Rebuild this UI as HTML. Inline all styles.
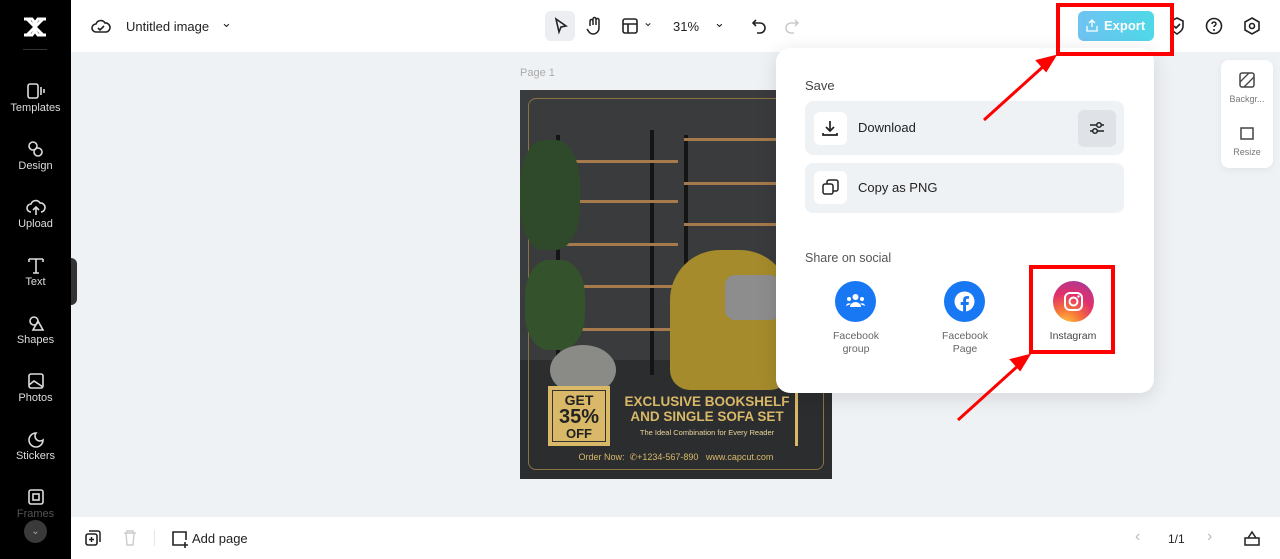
<!DOCTYPE html>
<html><head><meta charset="utf-8"><style>
*{margin:0;padding:0;box-sizing:border-box}
body{width:1280px;height:559px;overflow:hidden;background:#eff2f5;font-family:"Liberation Sans",sans-serif;position:relative;color:#222}
.abs{position:absolute}
.side{left:0;top:0;width:71px;height:559px;background:#000}
.si{position:absolute;left:0;width:71px;text-align:center;color:#ddd;font-size:11px}
.si svg{display:block;margin:0 auto 2px}
.top{left:71px;top:0;width:1209px;height:52px;background:#fff}
.bot{left:71px;top:517px;width:1209px;height:42px;background:#fff}
.pop{left:776px;top:48px;width:378px;height:345px;background:#fff;border-radius:14px;box-shadow:0 4px 20px rgba(0,0,0,.12)}
.row{position:absolute;left:29px;width:319px;background:#eff2f5;border-radius:8px}
.ib{position:absolute;left:9px;width:33px;height:33px;background:#fff;border-radius:6px}
.red{position:absolute;border:4px solid #f00}
</style></head><body>
<div class="abs side">
 <svg class="abs" style="left:22px;top:16px" width="26" height="22" viewBox="0 0 26 22"><path d="M2 3h8l3 4 3-4h8M2 19h8l3-4 3 4h8M5 3l16 16M21 3L5 19" stroke="#fff" stroke-width="3" fill="none"/></svg>
 <div class="abs" style="left:23px;top:49px;width:24px;height:1px;background:#333"></div>
 <div class="si" style="top:82px"><svg width="20" height="18"><rect x="2" y="2" width="10" height="14" rx="2" fill="none" stroke="#ddd" stroke-width="1.6"/><path d="M15 5v8M18 7v4" stroke="#ddd" stroke-width="1.6"/></svg>Templates</div>
 <div class="si" style="top:140px"><svg width="20" height="18"><circle cx="7" cy="6" r="4" fill="none" stroke="#ddd" stroke-width="1.6"/><circle cx="12" cy="12" r="4" fill="none" stroke="#ddd" stroke-width="1.6"/></svg>Design</div>
 <div class="si" style="top:198px"><svg width="20" height="18"><path d="M5 14a4 4 0 010-8 5 5 0 019-1 4 4 0 011 9M10 9v8M7 12l3-3 3 3" fill="none" stroke="#ddd" stroke-width="1.6"/></svg>Upload</div>
 <div class="si" style="top:256px"><svg width="20" height="18"><path d="M3 3h14M10 3v14M3 3v3M17 3v3M7 17h6" stroke="#ddd" stroke-width="1.6" fill="none"/></svg>Text</div>
 <div class="si" style="top:314px"><svg width="20" height="18"><circle cx="8" cy="7" r="4" fill="none" stroke="#ddd" stroke-width="1.6"/><path d="M12 7l5 9H7z" fill="none" stroke="#ddd" stroke-width="1.6"/></svg>Shapes</div>
 <div class="si" style="top:372px"><svg width="20" height="18"><rect x="3" y="2" width="14" height="14" rx="2" fill="none" stroke="#ddd" stroke-width="1.6"/><path d="M3 13l5-4 9 6" fill="none" stroke="#ddd" stroke-width="1.6"/></svg>Photos</div>
 <div class="si" style="top:430px"><svg width="20" height="18"><path d="M10 3a7 7 0 107 7 5 5 0 01-7-7z" fill="none" stroke="#ddd" stroke-width="1.6"/></svg>Stickers</div>
 <div class="si" style="top:488px;color:#555"><svg width="20" height="18"><rect x="3" y="2" width="14" height="14" rx="2" fill="none" stroke="#ddd" stroke-width="1.6"/><rect x="7" y="6" width="6" height="6" fill="none" stroke="#ddd" stroke-width="1.6"/></svg>Frames</div>
 <div class="abs" style="left:24px;top:520px;width:23px;height:23px;border-radius:50%;background:#3a3a3a;color:#aaa;font-size:10px;text-align:center;line-height:23px">⌄</div>
 <div class="abs" style="left:71px;top:258px;width:6px;height:47px;background:#333;border-radius:0 6px 6px 0"></div>
</div>
<div class="abs top">
 <svg class="abs" style="left:20px;top:17px" width="20" height="18"><path d="M5 15a4 4 0 010-8 5 5 0 019-1 4 4 0 011 9z M7 11l2 2 4-4" fill="none" stroke="#222" stroke-width="1.6"/></svg>
 <div class="abs" style="left:55px;top:19px;font-size:13px;color:#222">Untitled image</div>
 <div class="abs" style="left:150px;top:15px;font-size:13px">⌄</div>
 <div class="abs" style="left:474px;top:11px;width:30px;height:30px;background:#eceef1;border-radius:6px"></div>
 <svg class="abs" style="left:482px;top:17px" width="16" height="18"><path d="M3 2l10 7-5 1-2 5z" fill="none" stroke="#222" stroke-width="1.6"/></svg>
 <svg class="abs" style="left:514px;top:16px" width="18" height="20"><path d="M5 10V5a1.5 1.5 0 013 0v4M8 9V3a1.5 1.5 0 013 0v6M11 9V4a1.5 1.5 0 013 0v8a6 6 0 01-6 6c-3 0-4-2-6-5" fill="none" stroke="#222" stroke-width="1.5"/></svg>
 <svg class="abs" style="left:551px;top:18px" width="16" height="16"><rect x="1" y="1" width="14" height="14" rx="2" fill="none" stroke="#222" stroke-width="1.6"/><path d="M1 6h14M6 6v9" stroke="#222" stroke-width="1.6"/></svg>
 <div class="abs" style="left:572px;top:15px;font-size:12px">⌄</div>
 <div class="abs" style="left:602px;top:19px;font-size:13px">31%</div>
 <div class="abs" style="left:643px;top:15px;font-size:13px">⌄</div>
 <svg class="abs" style="left:680px;top:18px" width="16" height="16"><path d="M5 2L2 5l3 3M2 5h7a5 5 0 010 10H6" fill="none" stroke="#222" stroke-width="1.6"/></svg>
 <svg class="abs" style="left:713px;top:18px" width="16" height="16"><path d="M11 2l3 3-3 3M14 5H7a5 5 0 000 10h3" fill="none" stroke="#ccc" stroke-width="1.6"/></svg>
 <div class="abs" style="left:1007px;top:11px;width:76px;height:30px;border-radius:6px;background:linear-gradient(90deg,#6fc3f2,#4fd8e8);color:#fff;font-size:13px;font-weight:bold;line-height:30px;padding-left:26px">Export</div>
 <svg class="abs" style="left:1015px;top:19px" width="12" height="13"><path d="M6 8V1M3 4l3-3 3 3M1 7v5h10V7" fill="none" stroke="#fff" stroke-width="1.3"/></svg>
 <svg class="abs" style="left:1098px;top:17px" width="16" height="18"><path d="M8 1l6 3v5c0 4-3 6-6 8-3-2-6-4-6-8V4z M5 9l2 2 4-4" fill="none" stroke="#222" stroke-width="1.6"/></svg>
 <svg class="abs" style="left:1134px;top:17px" width="18" height="18"><circle cx="9" cy="9" r="7.5" fill="none" stroke="#222" stroke-width="1.6"/><path d="M7 7a2 2 0 114 0c0 1.5-2 1.5-2 3" fill="none" stroke="#222" stroke-width="1.5"/><circle cx="9" cy="13" r="1" fill="#222"/></svg>
 <svg class="abs" style="left:1172px;top:17px" width="18" height="18"><path d="M9 1l7 4v8l-7 4-7-4V5z" fill="none" stroke="#222" stroke-width="1.6"/><circle cx="9" cy="9" r="2.5" fill="none" stroke="#222" stroke-width="1.6"/></svg>
</div>
<div class="abs" style="left:520px;top:67px;font-size:11px;color:#aaa">Page 1</div>
<div class="abs" style="left:520px;top:90px;width:312px;height:389px;background:#3a3b3d;overflow:hidden">
 <div class="abs" style="left:0;top:270px;width:312px;height:119px;background:#2c2d2f"></div>
 <div class="abs" style="left:8px;top:8px;width:296px;height:372px;border:1px solid #8a7445;border-radius:8px"></div>
 <div class="abs" style="left:36px;top:45px;width:4px;height:240px;background:#151515"></div>
 <div class="abs" style="left:130px;top:40px;width:4px;height:245px;background:#151515"></div>
 <div class="abs" style="left:164px;top:45px;width:4px;height:240px;background:#151515"></div>
 <div class="abs" style="left:38px;top:70px;width:120px;height:3px;background:#a57a4c"></div>
 <div class="abs" style="left:38px;top:110px;width:120px;height:3px;background:#a57a4c"></div>
 <div class="abs" style="left:38px;top:153px;width:120px;height:3px;background:#a57a4c"></div>
 <div class="abs" style="left:38px;top:195px;width:120px;height:3px;background:#a57a4c"></div>
 <div class="abs" style="left:38px;top:238px;width:120px;height:3px;background:#a57a4c"></div>
 <div class="abs" style="left:164px;top:48px;width:100px;height:3px;background:#a57a4c"></div>
 <div class="abs" style="left:164px;top:92px;width:100px;height:3px;background:#a57a4c"></div>
 <div class="abs" style="left:164px;top:133px;width:100px;height:3px;background:#a57a4c"></div>
 <div class="abs" style="left:0;top:50px;width:60px;height:110px;background:#2f4a2a;border-radius:40%"></div>
 <div class="abs" style="left:5px;top:170px;width:60px;height:90px;background:#34532c;border-radius:40%"></div>
 <div class="abs" style="left:150px;top:160px;width:120px;height:140px;background:#a58b2c;border-radius:50px 50px 20px 20px"></div>
 <div class="abs" style="left:205px;top:185px;width:55px;height:45px;background:#8d8d8d;border-radius:10px"></div>
 <div class="abs" style="left:30px;top:255px;width:66px;height:50px;background:#8a8a86;border-radius:50%"></div>
 <div class="abs" style="left:28px;top:296px;width:250px;height:60px;border-right:3px solid #d9b968"></div>
 <div class="abs" style="left:28px;top:296px;width:62px;height:60px;background:#d9b968;color:#222;text-align:center;font-weight:bold;line-height:1"><div style="margin:4px;border:1px solid #333;height:52px;padding-top:2px"><div style="font-size:14px">GET</div><div style="font-size:20px">35%</div><div style="font-size:13px">OFF</div></div></div>
 <div class="abs" style="left:96px;top:304px;width:182px;text-align:center;color:#d9b968;font-weight:bold;font-size:13.5px;line-height:15px">EXCLUSIVE BOOKSHELF<br>AND SINGLE SOFA SET</div>
 <div class="abs" style="left:96px;top:338px;width:182px;text-align:center;color:#e8d49a;font-size:7.5px">The Ideal Combination for Every Reader</div>
 <div class="abs" style="left:0;top:362px;width:312px;text-align:center;color:#d9b968;font-size:9px">Order Now: &nbsp;✆+1234-567-890 &nbsp; www.capcut.com</div>
</div>
<div class="abs" style="left:1221px;top:60px;width:52px;height:108px;background:#fff;border-radius:8px;box-shadow:0 2px 8px rgba(0,0,0,.06)">
 <svg class="abs" style="left:18px;top:12px" width="16" height="16"><rect x="1" y="1" width="14" height="14" rx="2" fill="none" stroke="#444" stroke-width="1.5"/><path d="M1 10l9-9M5 15l10-10" stroke="#444" stroke-width="1.3"/></svg>
 <div class="abs" style="left:0;top:34px;width:52px;text-align:center;font-size:9px;color:#777">Backgr...</div>
 <svg class="abs" style="left:18px;top:65px" width="16" height="16"><rect x="2" y="3" width="12" height="11" fill="none" stroke="#444" stroke-width="1.5"/></svg>
 <div class="abs" style="left:0;top:87px;width:52px;text-align:center;font-size:9px;color:#777">Resize</div>
</div>
<div class="abs bot">
 <svg class="abs" style="left:14px;top:13px" width="16" height="16"><rect x="1" y="4" width="11" height="11" rx="2" fill="none" stroke="#222" stroke-width="1.6"/><path d="M4 1h9a2 2 0 012 2v9M6.5 7v5M4 9.5h5" stroke="#222" stroke-width="1.5" fill="none"/></svg>
 <svg class="abs" style="left:52px;top:13px" width="14" height="16"><path d="M1 3h12M4 3V1h6v2M3 3l1 12h6l1-12" fill="none" stroke="#ccc" stroke-width="1.4"/></svg>
 <div class="abs" style="left:83px;top:13px;width:1px;height:16px;background:#e5e5e5"></div>
 <svg class="abs" style="left:100px;top:13px" width="18" height="18"><path d="M11 15H2V2h13v8M14 12v6M11 15h6" fill="none" stroke="#222" stroke-width="1.6"/></svg>
 <div class="abs" style="left:121px;top:14px;font-size:13px;color:#222">Add page</div>
 <div class="abs" style="left:1064px;top:11px;font-size:16px;color:#bbb">‹</div>
 <div class="abs" style="left:1097px;top:15px;font-size:12px;color:#222">1/1</div>
 <div class="abs" style="left:1136px;top:11px;font-size:16px;color:#bbb">›</div>
 <svg class="abs" style="left:1173px;top:13px" width="16" height="16"><path d="M1 8h14v7H1zM4 8l4-6 4 6" fill="none" stroke="#222" stroke-width="1.5"/></svg>
</div>
<div class="abs pop">
 <div class="abs" style="left:29px;top:30px;font-size:13px;color:#444">Save</div>
 <div class="row" style="top:53px;height:54px">
  <div class="ib" style="top:11px"><svg style="margin:7px" width="18" height="18"><path d="M9 2v10M5 8l4 4 4-4M2 14v2h14v-2" fill="none" stroke="#222" stroke-width="1.7"/></svg></div>
  <div class="abs" style="left:53px;top:19px;font-size:13px;color:#222">Download</div>
  <div class="abs" style="left:273px;top:9px;width:38px;height:37px;background:#dfe3e8;border-radius:6px"><svg style="margin:10px 11px" width="16" height="16"><path d="M1 5h14M1 11h14" stroke="#222" stroke-width="1.5"/><circle cx="10" cy="5" r="2.3" fill="#dfe3e8" stroke="#222" stroke-width="1.5"/><circle cx="6" cy="11" r="2.3" fill="#dfe3e8" stroke="#222" stroke-width="1.5"/></svg></div>
 </div>
 <div class="row" style="top:115px;height:50px">
  <div class="ib" style="top:8px"><svg style="margin:8px" width="17" height="17"><rect x="1" y="5" width="10" height="10" rx="2" fill="none" stroke="#222" stroke-width="1.5"/><path d="M5 5V3a2 2 0 012-2h7a2 2 0 012 2v7a2 2 0 01-2 2h-3" fill="none" stroke="#222" stroke-width="1.5"/></svg></div>
  <div class="abs" style="left:53px;top:17px;font-size:13px;color:#222">Copy as PNG</div>
 </div>
 <div class="abs" style="left:29px;top:203px;font-size:12.5px;color:#555">Share on social</div>
 <div class="abs" style="left:59px;top:233px;width:41px;height:41px;border-radius:50%;background:#1877f2"><svg style="margin:11px 10px" width="21" height="18"><circle cx="10.5" cy="5" r="3" fill="#fff"/><circle cx="4" cy="7" r="2" fill="#fff"/><circle cx="17" cy="7" r="2" fill="#fff"/><path d="M5 15a5.5 5 0 0111 0zM1 14a3 3 0 015-2M20 14a3 3 0 00-5-2" fill="#fff"/></svg></div>
 <div class="abs" style="left:40px;top:282px;width:80px;text-align:center;font-size:10.5px;color:#666;line-height:13px">Facebook<br>group</div>
 <div class="abs" style="left:168px;top:233px;width:41px;height:41px;border-radius:50%;background:#1877f2"><svg style="margin:10px" width="21" height="21"><circle cx="10.5" cy="10.5" r="10" fill="#fff"/><path d="M12 21v-7h2.5l.4-3H12V9.3c0-.9.3-1.5 1.5-1.5H15V5.2c-.3 0-1.2-.1-2.2-.1-2.2 0-3.7 1.3-3.7 3.8V11H6.7v3h2.4v7z" fill="#1877f2"/></svg></div>
 <div class="abs" style="left:149px;top:282px;width:80px;text-align:center;font-size:10.5px;color:#666;line-height:13px">Facebook<br>Page</div>
 <div class="abs" style="left:277px;top:233px;width:41px;height:41px;border-radius:50%;background:radial-gradient(circle at 30% 110%,#fdd240 0%,#f77737 30%,#e1306c 60%,#c13584 80%,#833ab4 100%)"><svg style="margin:10px" width="21" height="21"><rect x="2" y="2" width="17" height="17" rx="5" fill="none" stroke="#fff" stroke-width="2"/><circle cx="10.5" cy="10.5" r="4" fill="none" stroke="#fff" stroke-width="2"/><circle cx="15.5" cy="5.5" r="1.2" fill="#fff"/></svg></div>
 <div class="abs" style="left:257px;top:282px;width:80px;text-align:center;font-size:10.5px;color:#444">Instagram</div>
</div>
<div class="red" style="left:1056px;top:3px;width:118px;height:53px"></div>
<div class="red" style="left:1029px;top:265px;width:86px;height:89px"></div>
<svg class="abs" style="left:0;top:0" width="1280" height="559"><g stroke="#f00" stroke-width="3" fill="#f00"><line x1="984" y1="120" x2="1046" y2="64"/><path d="M1054 57l-16 4 8 9z"/><line x1="958" y1="420" x2="1020" y2="364"/><path d="M1028 356l-16 4 8 9z"/></g></svg>
</body></html>
